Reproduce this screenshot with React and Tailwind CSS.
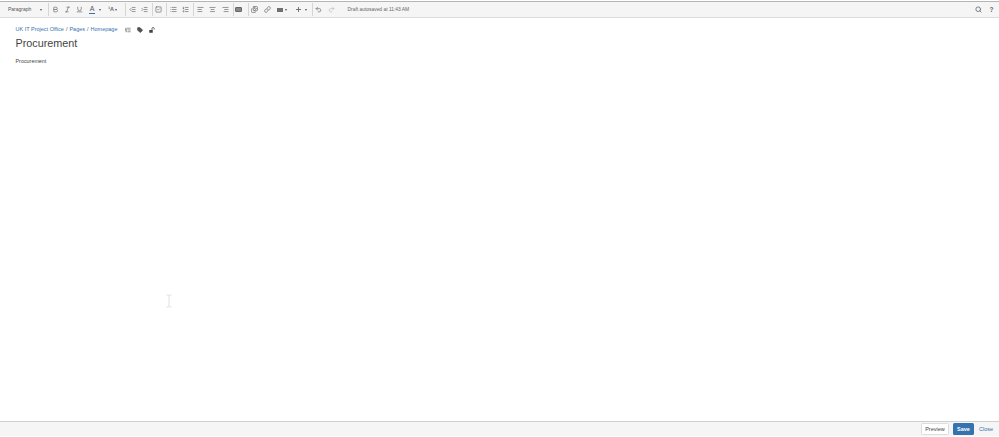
import {
  Bold, Italic, Underline, Outdent, Indent, SquareCheck, List, ListOrdered,
  AlignLeft, AlignCenter, AlignRight, Images, Link, Plus, Undo2, Redo2, Search, Tag, ListTree,
} from 'lucide-react';

const ink = '#707070';

function Btn({ icon: Icon, color = ink, w = 'w-[12.4px]', size = 7, stroke = 2.4 }) {
  return (
    <span className={`flex h-[14px] ${w} shrink-0 items-center justify-center`}>
      <Icon size={size} color={color} strokeWidth={stroke} />
    </span>
  );
}

function Caret({ className = 'ml-[2px]' }) {
  return <span className={`${className} h-0 w-0 shrink-0 border-x-[1.5px] border-t-[2px] border-x-transparent border-t-[#555]`} />;
}

function Sep({ className = '' }) {
  return <span className={`${className} h-[13px] w-px shrink-0 bg-[#d5d5d5]`} />;
}

export default function App() {
  return (
    <div className="flex h-[437px] w-[999px] flex-col overflow-hidden bg-white font-['Liberation_Sans',Arial,sans-serif] text-[#333]">
      <div className="mt-px flex h-[17px] shrink-0 items-center border-t border-t-[#b5b5b5] border-b border-b-[#dcdcdc] bg-[#f5f5f5] pl-[8px] pr-[1px]">
        <div className="flex w-[35px] shrink-0 items-center justify-between pr-[1px] text-[5px] text-[#555]">
          <span>Paragraph</span>
          <Caret className="" />
        </div>
        <Sep className="ml-[5px]" />
        <Btn icon={Bold} />
        <Btn icon={Italic} />
        <Btn icon={Underline} />
        <span className="flex h-[14px] w-[12px] shrink-0 flex-col items-center justify-center text-[7px] leading-[6px] text-[#555]">
          A
          <span className="mt-[1px] h-[1px] w-[6px] bg-[#3572b0]" />
        </span>
        <Caret className="ml-[1px] mr-[7px]" />
        <span className="flex shrink-0 items-center text-[5.5px] font-bold text-[#666]">
          ¹A
          <Caret className="ml-[1px]" />
        </span>
        <Sep className="ml-[8px]" />
        <Btn icon={Outdent} />
        <Btn icon={Indent} />
        <Sep className="ml-[1px]" />
        <Btn icon={SquareCheck} />
        <Sep className="ml-[1px]" />
        <Btn icon={List} />
        <Btn icon={ListOrdered} />
        <Sep className="ml-[1.4px]" />
        <Btn icon={AlignLeft} />
        <Btn icon={AlignCenter} />
        <Btn icon={AlignRight} />
        <Sep className="ml-[1px]" />
        <span className="flex h-[14px] w-[10px] shrink-0 items-center justify-center">
          <span className="h-[5px] w-[7px] rounded-[1px] border border-[#666] bg-[#888]" />
        </span>
        <Sep className="ml-[4px]" />
        <Btn icon={Images} />
        <Btn icon={Link} />
        <span className="ml-[4px] h-[4px] w-[6px] shrink-0 bg-[#707070]" />
        <Caret />
        <span className="ml-[7px] flex">
          <Btn icon={Plus} w="w-[9px]" stroke={3.4} />
        </span>
        <Caret />
        <Sep className="ml-[4.5px]" />
        <Btn icon={Undo2} />
        <Btn icon={Redo2} color="#bdbdbd" />
        <span className="ml-[10px] text-[4.9px] text-[#666]">Draft autosaved at 11:43 AM</span>
        <span className="ml-auto flex items-center">
          <Btn icon={Search} stroke={3} />
          <span className="flex w-[13px] justify-center text-[6.5px] font-bold text-[#666]">?</span>
        </span>
      </div>

      <div className="relative flex-1 pl-[15.5px] pt-[7px]">
        <div className="flex h-[9px] items-center text-[5.5px] text-[#3572b0]">
          <span>UK IT Project Office</span>
          <span className="mx-[2px] text-[#555]">/</span>
          <span>Pages</span>
          <span className="mx-[2px] text-[#555]">/</span>
          <span>Homepage</span>
          <span className="ml-[7px] flex items-center gap-[6px]">
            <ListTree size={6} color="#555" strokeWidth={2.4} />
            <Tag size={6} color="#444" fill="#555" strokeWidth={2} />
            <svg width="6" height="6" viewBox="0 0 12 12" fill="none">
              <rect x="0.5" y="6" width="7" height="5.5" fill="#444" />
              <path d="M6 6V3.2a2.2 2.2 0 0 1 4.4 0V5" stroke="#444" strokeWidth="1.6" />
            </svg>
          </span>
        </div>
        <h1 className="mt-[2px] text-[10.8px] leading-[15px] text-[#444]">Procurement</h1>
        <p className="mt-[5.5px] text-[5.4px] leading-[8px] text-[#444]">Procurement</p>
        <svg className="absolute left-[165px] top-[276px]" width="8" height="14" viewBox="0 0 8 14" fill="none" stroke="#d8d8d8" strokeWidth="0.8">
          <path d="M1.5 1h2l.5.6.5-.6h2M4 1.6v10.8M1.5 13h2l.5-.6.5.6h2" />
        </svg>
      </div>

      <div className="mb-px flex h-[15px] shrink-0 items-center justify-end border-t border-t-[#cfcfcf] bg-[#f5f5f5] pr-[6px] text-[5.5px]">
        <span className="flex h-[12px] w-[28px] items-center justify-center rounded-[1.5px] border border-[#ddd] bg-white text-[#444]">Preview</span>
        <span className="ml-[4px] flex h-[12px] w-[21px] items-center justify-center rounded-[1.5px] bg-[#3572b0] font-bold text-white">Save</span>
        <span className="ml-[5px] text-[#3572b0]">Close</span>
      </div>
    </div>
  );
}
